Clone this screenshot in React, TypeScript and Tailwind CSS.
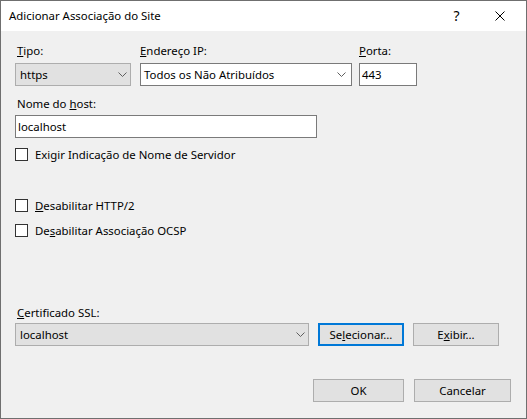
import React from "react"

const Chevron = () => (
  <svg width="9" height="5" viewBox="0 0 9 5" className="shrink-0">
    <polyline points="0.5,0.5 4.5,4.5 8.5,0.5" fill="none" stroke="#5f5f5f" strokeWidth="1" />
  </svg>
)

const Check = ({ children }: { children: React.ReactNode }) => (
  <div className="flex items-center h-[13px]">
    <div className="w-[13px] h-[13px] border border-[#333333] bg-white shrink-0" />
    <span className="ml-[7px] leading-[16px]">{children}</span>
  </div>
)

const Btn = ({ children, className = "", focused = false }: { children: React.ReactNode; className?: string; focused?: boolean }) => (
  <div
    className={
      "h-[23px] flex items-center justify-center bg-[#e1e1e1] " +
      (focused ? "border-2 border-[#0078d7] " : "border border-[#adadad] ") +
      className
    }
  >
    {children}
  </div>
)

export default function App() {
  return (
    <div className="w-[527px] h-[419px] border border-[#6f6f6f] bg-[#f0f0f0] flex flex-col font-['Noto_Sans',sans-serif] text-[11.4px] text-black">
      <div className="h-[30px] bg-white flex items-center justify-between pl-[8px] pr-[5px] shrink-0">
        <span className="leading-[16px]">Adicionar Associação do Site</span>
        <div className="flex items-center h-full">
          <div className="w-[43px] flex justify-center text-[14px] leading-[16px]">?</div>
          <div className="w-[43px] flex justify-center">
            <svg width="10" height="10" viewBox="0 0 10 10">
              <path d="M0.5 0.5 L9.5 9.5 M9.5 0.5 L0.5 9.5" stroke="#000" strokeWidth="1" fill="none" />
            </svg>
          </div>
        </div>
      </div>

      <div className="flex-1 pl-[14px] flex flex-col">
        <div className="flex mt-[12px]">
          <div className="flex flex-col w-[116px]">
            <span className="leading-[16px] pl-[2px]"><u>T</u>ipo:</span>
            <div className="mt-[4px] h-[23px] bg-[#e1e1e1] border border-[#adadad] flex items-center justify-between pl-[4px] pr-[3px]">
              <span>https</span>
              <Chevron />
            </div>
          </div>
          <div className="flex flex-col w-[212px] ml-[9px]">
            <span className="leading-[16px]"><u>E</u>ndereço IP:</span>
            <div className="mt-[4px] h-[23px] bg-white border border-[#7a7a7a] flex items-center justify-between pl-[3px] pr-[5px]">
              <span>Todos os Não Atribuídos</span>
              <Chevron />
            </div>
          </div>
          <div className="flex flex-col w-[58px] ml-[7px]">
            <span className="leading-[16px]"><u>P</u>orta:</span>
            <div className="mt-[4px] h-[23px] bg-white border border-[#7a7a7a] flex items-center pl-[2px]">
              <span>443</span>
            </div>
          </div>
        </div>

        <span className="mt-[10px] leading-[16px] pl-[2px]">Nome do <u>h</u>ost:</span>
        <div className="mt-[3px] w-[302px] h-[23px] bg-white border border-[#7a7a7a] flex items-center pl-[2px]">
          <span>localhost</span>
        </div>

        <div className="mt-[10px]">
          <Check>Exigir Indicação de Nome de Servidor</Check>
        </div>
        <div className="mt-[38px]">
          <Check><u>D</u>esabilitar HTTP/2</Check>
        </div>
        <div className="mt-[12px]">
          <Check>De<u>s</u>abilitar Associação OCSP</Check>
        </div>

        <span className="mt-[68px] leading-[16px] pl-[2px]"><u>C</u>ertificado SSL:</span>
        <div className="mt-[2px] flex items-center">
          <div className="w-[294px] h-[23px] bg-[#e1e1e1] border border-[#adadad] flex items-center justify-between pl-[4px] pr-[3px]">
            <span>localhost</span>
            <Chevron />
          </div>
          <Btn focused className="w-[86px] ml-[9px]">Se<u>l</u>ecionar...</Btn>
          <Btn className="w-[86px] ml-[9px]">E<u>x</u>ibir...</Btn>
        </div>

        <div className="mt-[33px] flex justify-end pr-[15px]">
          <Btn className="w-[91px]">OK</Btn>
          <Btn className="w-[97px] ml-[10px]">Cancelar</Btn>
        </div>
      </div>
    </div>
  )
}
